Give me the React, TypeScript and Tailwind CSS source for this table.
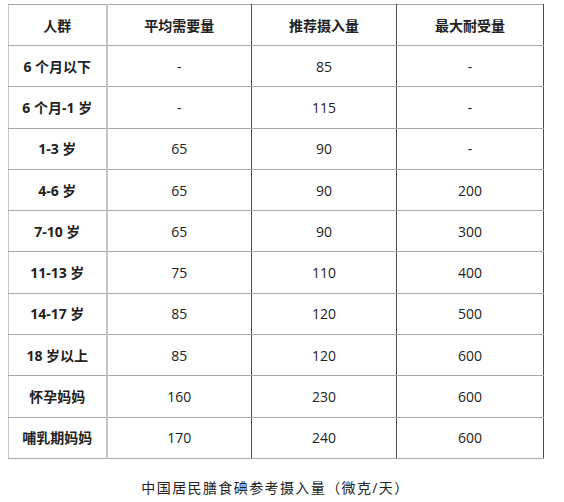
const rows = [
  ["6 个月以下", "-", "85", "-"],
  ["6 个月-1 岁", "-", "115", "-"],
  ["1-3 岁", "65", "90", "-"],
  ["4-6 岁", "65", "90", "200"],
  ["7-10 岁", "65", "90", "300"],
  ["11-13 岁", "75", "110", "400"],
  ["14-17 岁", "85", "120", "500"],
  ["18 岁以上", "85", "120", "600"],
  ["怀孕妈妈", "160", "230", "600"],
  ["哺乳期妈妈", "170", "240", "600"],
];

const headers = ["人群", "平均需要量", "推荐摄入量", "最大耐受量"];

const font = "font-['Open_Sans','Noto_Sans_CJK_SC',sans-serif]";

export default function App() {
  return (
    <div className={`w-[564px] h-[502px] bg-white pt-1 pl-2 text-[#222] ${font}`}>
      <table className="w-[535px] table-fixed border-collapse text-[14px]">
        <colgroup>
          <col className="w-[98px]" />
          <col className="w-[145px]" />
          <col className="w-[145px]" />
          <col className="w-[147px]" />
        </colgroup>
        <thead>
          <tr className="h-[41px]">
            {headers.map((h, i) => (
              <th
                key={h}
                className={
                  "border-y border-y-[#a8a8a8] text-center font-bold " +
                  (i === 0
                    ? "border-l border-l-[#c8c8c8] border-r-2 border-r-[#c4c4c4]"
                    : "border-r border-r-[#4a4a4a]")
                }
              >
                {h}
              </th>
            ))}
          </tr>
        </thead>
        <tbody>
          {rows.map((r) => (
            <tr key={r[0]} className="h-[41.3px]">
              {r.map((c, i) => (
                <td
                  key={i}
                  className={
                    "border-y border-y-[#a8a8a8] text-center " +
                    (i === 0
                      ? "border-l border-l-[#c8c8c8] border-r-2 border-r-[#c4c4c4] font-bold"
                      : "border-r border-r-[#4a4a4a]")
                  }
                >
                  {c}
                </td>
              ))}
            </tr>
          ))}
        </tbody>
      </table>
      <p className="mt-[18px] w-[535px] text-center text-[14px] tracking-[1.4px] text-[#222]">
        中国居民膳食碘参考摄入量（微克/天）
      </p>
    </div>
  );
}
